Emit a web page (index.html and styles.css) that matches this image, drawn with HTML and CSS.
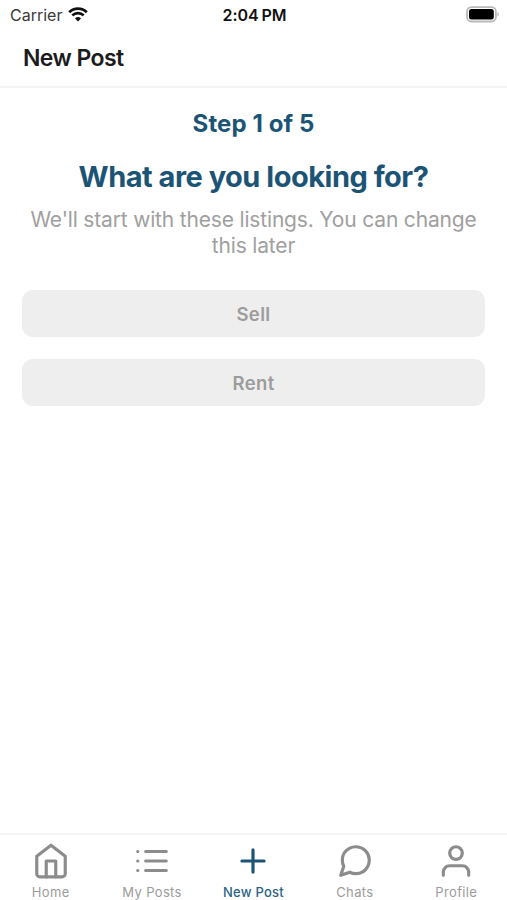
FILE: index.html
```html
<!DOCTYPE html>
<html lang="en">
<head>
<meta charset="utf-8">
<title>New Post</title>
<link rel="stylesheet" href="styles.css">
</head>
<body>
<div class="screen">
  <div class="status">
    <div class="carrier">
      <span>Carrier</span>
      <svg class="wifi" viewBox="0 0 20 15">
        <path d="M1.2 5.2a12.7 12.7 0 0 1 17.6 0" />
        <path d="M4.3 8.4a8.2 8.2 0 0 1 11.4 0" />
        <path class="wifi-base" d="M10 14.5 7 11.5a4.3 4.3 0 0 1 6 0z" />
      </svg>
    </div>
    <div class="time">2:04<span class="thin-space"></span>PM</div>
    <div class="power">
      <svg class="battery" viewBox="0 0 33 17">
        <rect class="shell" x="1" y="1.1" width="28.9" height="14.4" rx="4.5" />
        <rect class="charge" x="3" y="3.1" width="24.8" height="10.4" rx="2.5" />
        <path class="knob" d="M31.4 6.2q1.5.6 1.5 2.2t-1.5 2.2z" />
      </svg>
    </div>
  </div>
  <header class="header"><h1 class="title">New Post</h1></header>
  <main class="content">
    <p class="step">Step 1 of 5</p>
    <h2 class="question">What are you looking for?</h2>
    <p class="hint">We'll start with these listings. You can change<br>this later</p>
    <div class="options">
      <button class="option">Sell</button>
      <button class="option">Rent</button>
    </div>
  </main>
  <nav class="tabs">
    <a class="tab">
      <svg class="icon" viewBox="0 0 24 24"><path d="M3 9l9-7 9 7v11a2 2 0 0 1-2 2H5a2 2 0 0 1-2-2z"/><path d="M9 22V12h6v10"/></svg>
      <span class="label">Home</span>
    </a>
    <a class="tab">
      <svg class="icon" viewBox="0 0 24 24"><path d="M8 6h13M8 12h13M8 18h13M3 6h.01M3 12h.01M3 18h.01"/></svg>
      <span class="label">My Posts</span>
    </a>
    <a class="tab active">
      <svg class="icon" viewBox="0 0 24 24"><path d="M12 5v14M5 12h14"/></svg>
      <span class="label">New Post</span>
    </a>
    <a class="tab">
      <svg class="icon" viewBox="0 0 24 24"><path d="M21 11.5a8.38 8.38 0 0 1-.9 3.8 8.5 8.5 0 0 1-7.6 4.7 8.38 8.38 0 0 1-3.8-.9L3 21l1.9-5.7a8.38 8.38 0 0 1-.9-3.8 8.5 8.5 0 0 1 4.7-7.6 8.38 8.38 0 0 1 3.8-.9h.5a8.48 8.48 0 0 1 8 8v.5z"/></svg>
      <span class="label">Chats</span>
    </a>
    <a class="tab">
      <svg class="icon" viewBox="0 0 24 24"><path d="M20 21v-2a4 4 0 0 0-4-4H8a4 4 0 0 0-4 4v2"/><circle cx="12" cy="7" r="4"/></svg>
      <span class="label">Profile</span>
    </a>
  </nav>
</div>
</body>
</html>
```
FILE: styles.css
```css
* {
  box-sizing: border-box;
}

body {
  margin: 0;
  background: #fff;
  font-family: Inter, "Liberation Sans", sans-serif;
}

h1, h2, p {
  margin: 0;
}

.screen {
  display: flex;
  flex-direction: column;
  height: 900px;
}

.status {
  display: grid;
  grid-template-columns: 1fr auto 1fr;
  align-items: center;
  height: 29px;
  padding: 0 8px 0 10px;
  color: #111;
}

.carrier {
  display: flex;
  align-items: center;
  gap: 6px;
  font-size: 16px;
  color: #3a3a3a;
}

.wifi {
  width: 20px;
  height: 15px;
  fill: none;
  stroke: #111;
  stroke-width: 2.7;
}

.wifi .wifi-base {
  fill: #111;
  stroke: none;
}

.time {
  font-size: 16px;
  font-weight: 600;
  letter-spacing: -0.1px;
}

.thin-space {
  display: inline-block;
  width: 3px;
}

.power {
  display: flex;
  justify-content: flex-end;
}

.battery {
  width: 33px;
  height: 17px;
}

.shell {
  fill: #fff;
  stroke: #b9b9b9;
  stroke-width: 1.8;
}

.charge {
  fill: #000;
}

.knob {
  fill: #b9b9b9;
}

.header {
  display: flex;
  align-items: center;
  height: 59px;
  padding: 0 23px;
  border-bottom: 2px solid #f4f4f4;
}

.title {
  font-size: 23px;
  font-weight: 600;
  line-height: 28px;
  letter-spacing: -0.6px;
  color: #1c1c1e;
}

.content {
  flex: 1;
  padding: 20px 22px 0;
  text-align: center;
}

.step {
  font-size: 24px;
  font-weight: 700;
  line-height: 32px;
  letter-spacing: 0.1px;
  color: #1c5476;
}

.question {
  margin-top: 19px;
  font-size: 29px;
  font-weight: 700;
  line-height: 36px;
  letter-spacing: -0.5px;
  color: #1c5476;
}

.hint {
  margin-top: 12px;
  font-size: 21px;
  line-height: 26px;
  letter-spacing: -0.17px;
  color: #a0a0a0;
}

.options {
  display: flex;
  flex-direction: column;
  gap: 22px;
  margin-top: 31px;
}

.option {
  height: 47px;
  padding: 1px 0 0;
  border: 0;
  border-radius: 11px;
  background: #eee;
  font: inherit;
  font-size: 18.5px;
  font-weight: 600;
  letter-spacing: 0.35px;
  color: #9c9c9c;
}

.tabs {
  display: grid;
  grid-template-columns: repeat(5, 1fr);
  height: 67px;
  border-top: 2px solid #f4f4f4;
}

.tab {
  display: flex;
  flex-direction: column;
  align-items: center;
  padding-top: 7px;
  color: #9b9b9b;
}

.icon {
  width: 38px;
  height: 38px;
  fill: none;
  stroke: #8c8c8c;
  stroke-width: 2;
  stroke-linecap: round;
  stroke-linejoin: round;
}

.label {
  margin-top: 4px;
  font-size: 13px;
  line-height: 16px;
  letter-spacing: 0.35px;
}

.active {
  color: #2c6484;
}

.active .icon {
  stroke: #1c5476;
}

.active .label {
  font-weight: 500;
  letter-spacing: 0.25px;
}
```
